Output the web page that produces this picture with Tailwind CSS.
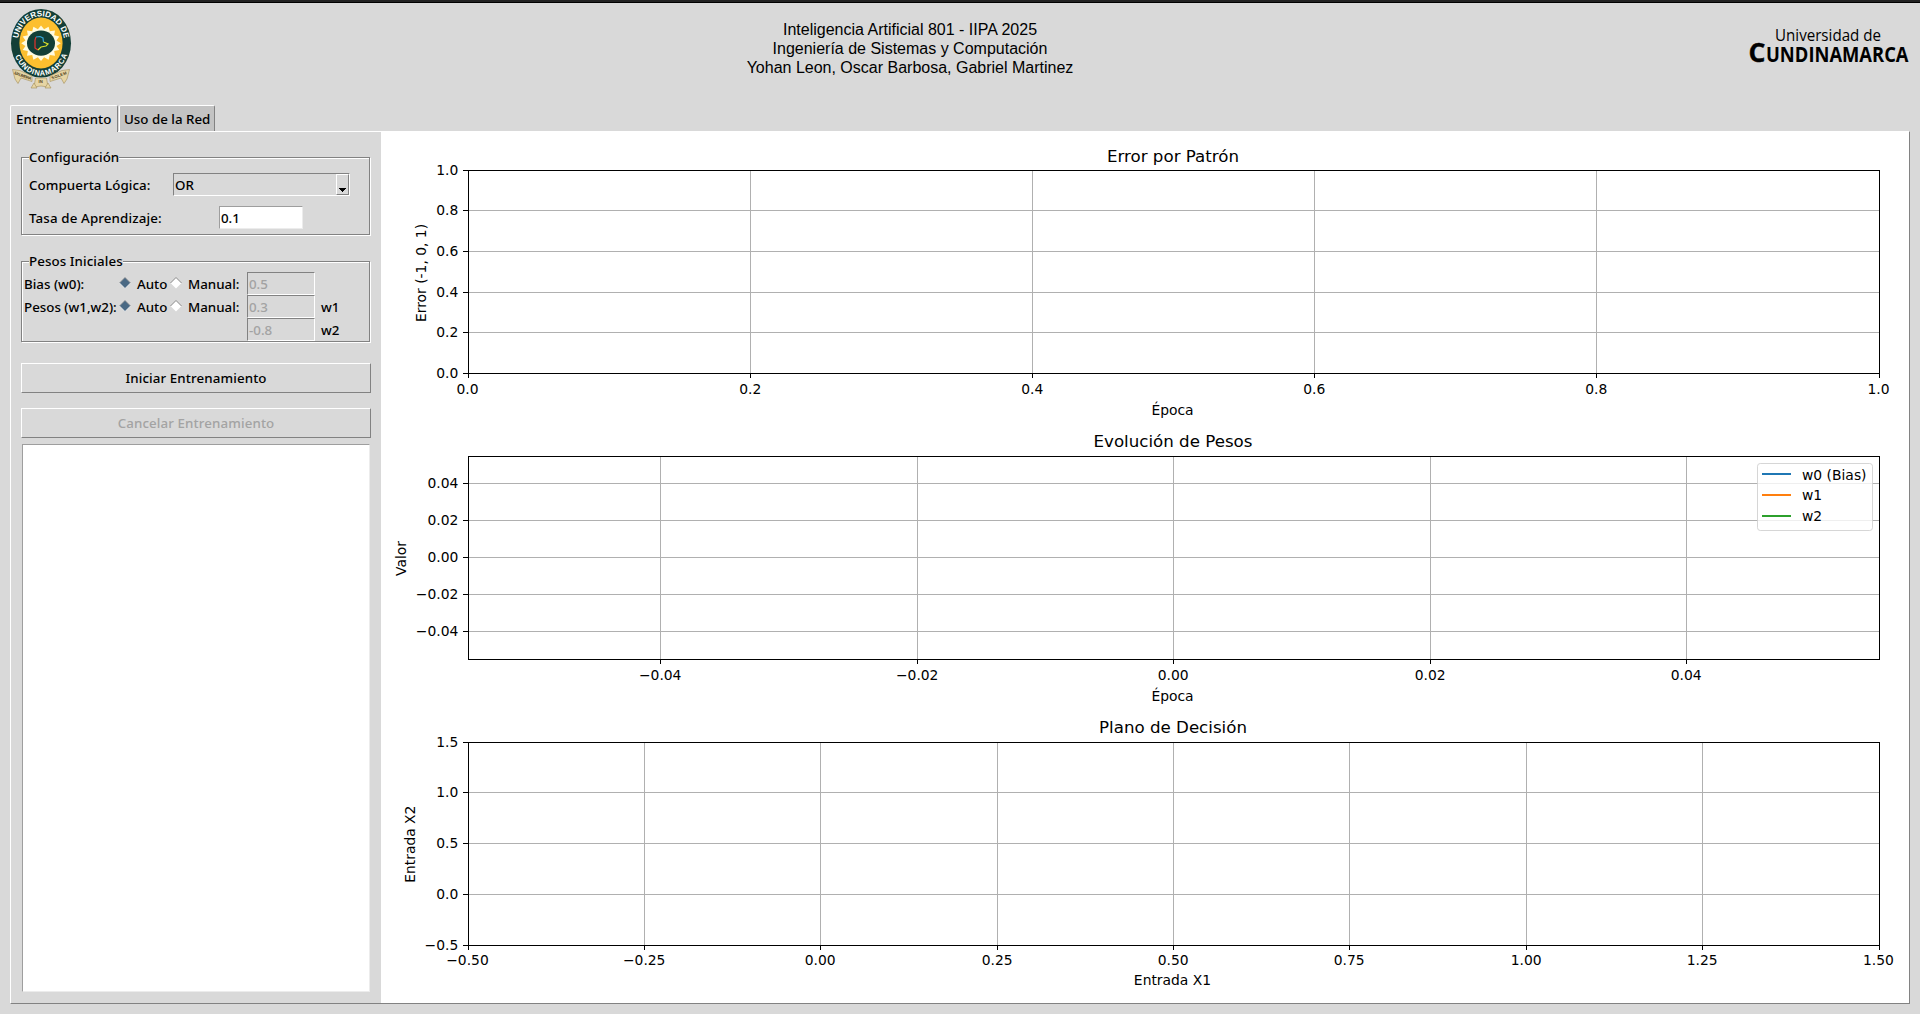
<!DOCTYPE html>
<html lang="es">
<head>
<meta charset="utf-8">
<title>Perceptrón - Entrenamiento</title>
<script src="https://cdn.jsdelivr.net/npm/@tailwindcss/browser@4"></script>
</head>
<body class="w-[1920px] h-[1014px] overflow-hidden bg-[#d9d9d9] text-black font-['Noto_Sans',sans-serif] font-medium text-[13.33px] leading-[23px] whitespace-nowrap flex flex-col">
  <div class="h-[3px] shrink-0 bg-[#222] border-b border-black"></div>

  <header class="h-[102px] shrink-0 flex justify-between items-start">
    <!-- University seal -->
    <svg class="w-[80px] h-[90px]" viewBox="0 3 80 90">
      <defs>
        <path id="arcTop" d="M18.1 38.5 A23.3 27.3 0 0 1 63.9 38.5"/>
        <path id="arcBottom" d="M15.2 56 A28 32 0 0 0 66.8 56"/>
      </defs>
      <ellipse cx="41" cy="43.2" rx="30" ry="34.3" fill="#133f37"/>
      <ellipse cx="41" cy="43" rx="21.6" ry="25.5" fill="#fcbf2f"/>
      <polygon id="sun" fill="#fffbe0"/>
      <ellipse cx="41" cy="43.2" rx="14" ry="12.6" fill="#133f37"/>
      <g fill="none" stroke-width="1.2">
        <path d="M36 37 L35 40 L35 48 L38 50" stroke="#e5322d"/>
        <path d="M36 37 L40 36.500 L43 38 L43.500 42" stroke="#38a5d8"/>
        <path d="M38 50 L41 47 L46 46 L48 44 L43.500 42" stroke="#dbe02a"/>
      </g>
      <g fill="#fff" font-family="Liberation Sans, Arial, sans-serif" font-weight="700">
        <text font-size="8"><textPath href="#arcTop" textLength="69">UNIVERSIDAD DE</textPath></text>
        <text font-size="7.6"><textPath href="#arcBottom" textLength="70">CUNDINAMARCA</textPath></text>
      </g>
      <g fill="#e6d5a4" stroke="#a38d58" stroke-width=".6">
        <path d="M12.500 69.500 L20 70.500 L32 76 L32 81.500 L21 78 L18 83.500 L15 79 Z"/>
        <path d="M69.500 69.500 L62 70.500 L50 76 L50 81.500 L61 78 L64 83.500 L67 79 Z"/>
        <path d="M35.500 78 L46.500 78 L48 87 Q41 85 34 87 Z"/>
        <path d="M34 83 L31 88 L37 88 Z M48 83 L51 88 L45 88 Z"/>
      </g>
      <g fill="#55451f" font-family="Liberation Sans, Arial, sans-serif" font-weight="700" font-size="4.2">
        <text transform="translate(14 74) rotate(20)" textLength="18">EX UMBRA</text>
        <text x="38.500" y="83">IN</text>
        <text transform="translate(52 79.500) rotate(-20)" textLength="16">SOLEM</text>
      </g>
    </svg>
    <div class="pt-[17px] text-center font-['Liberation_Sans',Arial,sans-serif] font-normal text-[16px] leading-[19px]">
      <div>Inteligencia Artificial 801 - IIPA 2025</div>
      <div>Ingeniería de Sistemas y Computación</div>
      <div>Yohan Leon, Oscar Barbosa, Gabriel Martinez</div>
    </div>
    <!-- University wordmark -->
    <svg class="w-[180px] h-[80px]" viewBox="1740 3 180 80" font-family="Open Sans, sans-serif">
      <text x="1775" y="41.300" font-size="16.4" font-weight="500" textLength="106" lengthAdjust="spacingAndGlyphs">Universidad de</text>
      <text x="1748.500" y="62" font-size="27.500" font-weight="700" stroke="#000" stroke-width=".4" textLength="17" lengthAdjust="spacingAndGlyphs">C</text>
      <text x="1766" y="62" font-size="20.6" font-weight="700" textLength="142.500" lengthAdjust="spacingAndGlyphs">UNDINAMARCA</text>
    </svg>
  </header>

  <main class="mx-[10px] flex flex-col">
    <nav class="h-[26px] flex gap-[1px]">
      <div class="w-[108px] h-[27px] z-10 bg-[#d9d9d9] border-l border-t border-white border-r border-r-[#828282] rounded-t-[2px] pl-[5px] leading-[27px]">Entrenamiento</div>
      <div class="w-[96px] h-[26px] bg-[#c3c3c3] border-l border-t border-white border-r border-r-[#828282] rounded-t-[2px] pl-[4px] leading-[27px]">Uso de la Red</div>
    </nav>
    <section class="w-[1900px] h-[873px] flex border border-white border-r-[#828282] border-b-[#828282]">
      <aside class="w-[370px] pl-[10px] pt-[15px] flex flex-col items-start">
        <!-- Configuration -->
        <fieldset class="mt-[10px] w-[349px] h-[78px] border border-[#828282] shadow-[1px_1px_0_#fff,inset_1px_1px_0_#fff] pl-[7px] pt-0">
          <div class="-mt-[12px] h-[23px] w-fit bg-[#d9d9d9] tracking-[0.05px]">Configuración</div>
          <div class="mt-[4px] h-[23px] flex">
            <div class="w-[144px] pt-px tracking-[0.07px]">Compuerta Lógica:</div>
            <div class="w-[177px] h-[23px] border border-[#828282] border-r-white border-b-white flex justify-between">
              <span class="pl-[1px]">OR</span>
              <div class="w-[13px] h-[21px] border border-white border-r-[#828282] border-b-[#828282] flex justify-center">
                <svg class="w-[7px] h-[4px] mt-[13px]" viewBox="0 0 7 4" shape-rendering="crispEdges"><path d="M0 0H7V1H6V2H5V3H4V4H3V3H2V2H1V1H0Z"/></svg>
              </div>
            </div>
          </div>
          <div class="mt-[10px] h-[23px] flex">
            <div class="w-[190px] pt-px tracking-[0.13px]">Tasa de Aprendizaje:</div>
            <div class="w-[84px] h-[23px] bg-white border border-[#9e9e9e] border-r-[#ececec] border-b-[#ececec] pl-[1px]">0.1</div>
          </div>
        </fieldset>
        <!-- Initial weights -->
        <fieldset class="mt-[26px] w-[349px] h-[81px] border border-[#828282] shadow-[1px_1px_0_#fff,inset_1px_1px_0_#fff] pl-[2px]">
          <div class="ml-[5px] -mt-[12px] h-[22px] w-fit bg-[#d9d9d9] tracking-[0.08px]">Pesos Iniciales</div>
          <div class="grid grid-cols-[95px_18px_33px_18px_59px_74px_20px] auto-rows-[23px]">
            <span class="pt-px">Bias (w0):</span>
            <svg class="w-[12px] h-[12px] mt-[5px]" viewBox="0 0 12 12"><path d="M6 .5L11.500 6 6 11.500.5 6Z" fill="#4a6984"/><path d="M.5 6L6 .5 11.500 6" fill="none" stroke="#888" stroke-width=".7"/><path d="M.5 6L6 11.500 11.500 6" fill="none" stroke="#fff" stroke-width=".7"/></svg>
            <span class="pt-px">Auto</span>
            <svg class="w-[12px] h-[12px] mt-[5px]" viewBox="0 0 12 12"><path d="M6 .5L11.500 6 6 11.500.5 6Z" fill="#fff"/><path d="M.5 6L6 .5 11.500 6" fill="none" stroke="#888"/></svg>
            <span class="pt-px">Manual:</span>
            <div class="w-[68px] h-[23px] border border-[#828282] border-r-white border-b-white pl-[1px] text-[#a3a3a3]">0.5</div>
            <span></span>
            <span class="pt-px">Pesos (w1,w2):</span>
            <svg class="w-[12px] h-[12px] mt-[5px]" viewBox="0 0 12 12"><path d="M6 .5L11.500 6 6 11.500.5 6Z" fill="#4a6984"/><path d="M.5 6L6 .5 11.500 6" fill="none" stroke="#888" stroke-width=".7"/><path d="M.5 6L6 11.500 11.500 6" fill="none" stroke="#fff" stroke-width=".7"/></svg>
            <span class="pt-px">Auto</span>
            <svg class="w-[12px] h-[12px] mt-[5px]" viewBox="0 0 12 12"><path d="M6 .5L11.500 6 6 11.500.5 6Z" fill="#fff"/><path d="M.5 6L6 .5 11.500 6" fill="none" stroke="#888"/></svg>
            <span class="pt-px">Manual:</span>
            <div class="w-[68px] h-[23px] border border-[#828282] border-r-white border-b-white pl-[1px] text-[#a3a3a3]">0.3</div>
            <span class="pt-px">w1</span>
            <div class="col-start-6 w-[68px] h-[23px] border border-[#828282] border-r-white border-b-white pl-[1px] text-[#a3a3a3]">-0.8</div>
            <span class="pt-px">w2</span>
          </div>
        </fieldset>
        <button class="mt-[21px] w-[350px] h-[30px] border border-white border-r-[#828282] border-b-[#828282] leading-[28px] tracking-[0.11px]">Iniciar Entrenamiento</button>
        <button class="mt-[15px] w-[350px] h-[30px] border border-white border-r-[#828282] border-b-[#828282] leading-[28px] tracking-[0.11px] text-[#a3a3a3]" disabled>Cancelar Entrenamiento</button>
        <div class="mt-[6px] ml-px w-[348px] h-[548px] bg-white border border-[#9e9e9e] border-r-[#ececec] border-b-[#ececec]"></div>
      </aside>
      <svg id="figure" class="w-[1528px] h-[871px] bg-white" viewBox="381 132 1528 871" font-family="DejaVu Sans, sans-serif" font-weight="400" font-size="13.89"></svg>
    </section>
  </main>

<script>
  // Sixteen-pointed sun of the seal
  const pts = [];
  for (let i = 0; i < 32; i++) {
    const a = Math.PI * i / 16, k = i % 2 ? 0.8 : 1;
    pts.push((41 + 19.8 * k * Math.cos(a)).toFixed(2) + ',' + (43.2 + 17.8 * k * Math.sin(a)).toFixed(2));
  }
  document.getElementById('sun').setAttribute('points', pts.join(' '));

  const L = 468, R = 1879;
  const axes = [
    { title: 'Error por Patrón', xlabel: 'Época', ylabel: 'Error (-1, 0, 1)', yx: 426, yc: 273, top: 170, bottom: 373, ty: 162, tick: 394, lab: 415,
      x: [[468,'0.0'],[750,'0.2'],[1032,'0.4'],[1314,'0.6'],[1596,'0.8'],[1879,'1.0']],
      y: [[373,'0.0'],[332,'0.2'],[292,'0.4'],[251,'0.6'],[210,'0.8'],[170,'1.0']] },
    { title: 'Evolución de Pesos', xlabel: 'Época', ylabel: 'Valor', yx: 405.5, yc: 558.5, top: 456, bottom: 659, ty: 447, tick: 680, lab: 701,
      x: [[660,'−0.04'],[917,'−0.02'],[1173,'0.00'],[1430,'0.02'],[1686,'0.04']],
      y: [[631,'−0.04'],[594,'−0.02'],[557,'0.00'],[520,'0.02'],[483,'0.04']] },
    { title: 'Plano de Decisión', xlabel: 'Entrada X1', ylabel: 'Entrada X2', yx: 415, yc: 844.2, top: 742, bottom: 945, ty: 733, tick: 965, lab: 985,
      x: [[468,'−0.50'],[644,'−0.25'],[820,'0.00'],[997,'0.25'],[1173,'0.50'],[1349,'0.75'],[1526,'1.00'],[1702,'1.25'],[1879,'1.50']],
      y: [[945,'−0.5'],[894,'0.0'],[843,'0.5'],[792,'1.0'],[742,'1.5']] }
  ];
  const line = (x1, y1, x2, y2, c) => `<path d="M${x1} ${y1}L${x2} ${y2}" stroke="${c}" shape-rendering="crispEdges"/>`;
  let out = '';
  for (const a of axes) {
    const cx = (L + R) / 2;
    for (const [x, t] of a.x) {
      out += line(x + .5, a.top, x + .5, a.bottom, '#b0b0b0') + line(x + .5, a.bottom, x + .5, a.bottom + 5, '#000');
      out += `<text x="${x === L || x === R ? x - .5 : x + .2}" y="${a.tick}" text-anchor="middle">${t}</text>`;
    }
    for (const [y, t] of a.y) {
      out += line(L, y + .5, R, y + .5, '#b0b0b0') + line(L - 5, y + .5, L, y + .5, '#000');
      out += `<text x="458.3" y="${y + 5.3}" text-anchor="end">${t}</text>`;
    }
    out += `<rect x="${L + .5}" y="${a.top + .5}" width="${R - L}" height="${a.bottom - a.top}" fill="none" stroke="#000" shape-rendering="crispEdges"/>`;
    out += `<text x="${cx - .5}" y="${a.ty}" font-size="16.67" text-anchor="middle">${a.title}</text>`;
    out += `<text x="${cx - 1}" y="${a.lab}" text-anchor="middle">${a.xlabel}</text>`;
    out += `<text transform="translate(${a.yx} ${a.yc}) rotate(-90)" text-anchor="middle">${a.ylabel}</text>`;
  }
  out += '<rect x="1757.500" y="463.500" width="115" height="67" rx="2.800" fill="#fff" fill-opacity=".8" stroke="#ccc" stroke-opacity=".8"/>';
  [['#1f77b4', 'w0 (Bias)', 474, 480], ['#ff7f0e', 'w1', 495, 500], ['#2ca02c', 'w2', 516, 521]].forEach(([c, t, y, b]) => {
    out += `<path d="M1762 ${y}H1791" stroke="${c}" stroke-width="2"/><text x="1802" y="${b}">${t}</text>`;
  });
  document.getElementById('figure').innerHTML = out;
</script>
</body>
</html>
